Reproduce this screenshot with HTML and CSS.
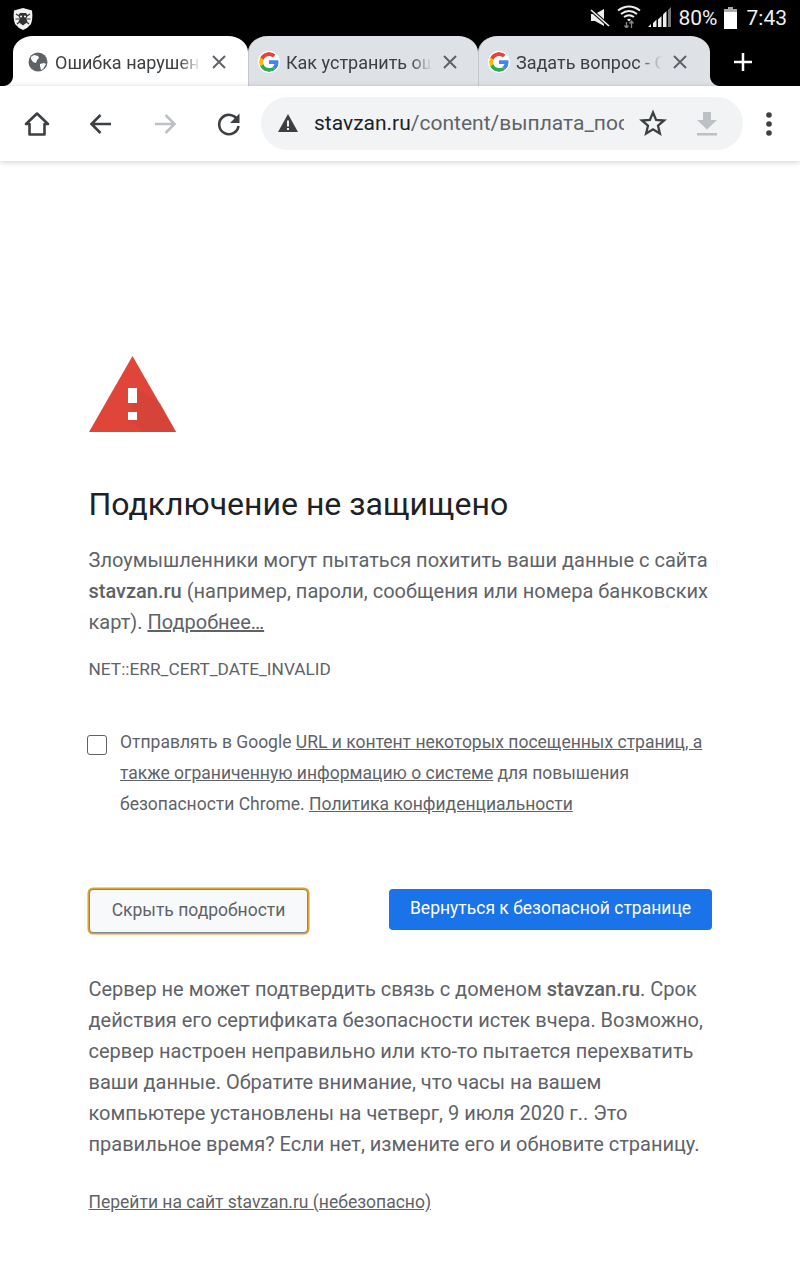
FILE: index.html
```html
<!DOCTYPE html>
<html lang="ru">
<head>
    <meta charset="UTF-8">
    <meta name="viewport" content="width=device-width, initial-scale=1.0">
    <title>Ошибка нарушения конфиденциальности</title>
    <link rel="stylesheet" href="styles.css">
</head>
<body>
    <div class="status-bar">
        <svg class="status-shield" width="22" height="24" viewBox="0 0 22 24">
            <path d="M11 1 L20 3.500 Q21 12 19 17 Q16 21 11 23 Q6 21 3 17 Q1 12 2 3.500 Z" fill="#f2f2f2"/>
            <path d="M8 6h6l1.500 2-1 4 1 3-4.500 3.500L6.500 15l1-3-1-4z" fill="#333"/>
            <path d="M4 7l3 2M18 7l-3 2M3.500 12h3.500M18.500 12H15M5 17l2.500-2M17 17l-2.500-2" stroke="#333" stroke-width="1.200" fill="none"/>
            <circle cx="9" cy="9.500" r="1" fill="#fff"/><circle cx="13" cy="9.500" r="1" fill="#fff"/>
        </svg>
        <div class="status-right">
            <svg class="status-mute" width="20" height="20" viewBox="0 0 20 20">
                <path d="M1 6h4l9-5v17l-9-5H1z" fill="#eee"/>
                <path d="M1 2l18 16" stroke="#000" stroke-width="3.500"/>
                <path d="M1 2l18 16" stroke="#eee" stroke-width="1.600"/>
            </svg>
            <svg class="status-wifi" width="24" height="24" viewBox="0 0 24 24">
                <path d="M1 6.500Q12-1.500 23 6.500M4 10Q12 4 20 10M7 13Q12 9.500 17 13" stroke="#eee" stroke-width="2" fill="none"/>
                <path d="M10 15.500Q12 14 14 15.500L12 17.500z" fill="#eee"/>
                <path d="M9.500 18v6M7.500 21.500l2 2.500 2-2.500" stroke="#888" stroke-width="1.300" fill="none"/>
                <path d="M14.500 24v-7M12.500 19.500l2-2.500 2 2.500" stroke="#888" stroke-width="1.300" fill="none"/>
            </svg>
            <svg class="status-signal" width="24" height="22" viewBox="0 0 24 22">
                <path d="M1 21h3v-3zM6 21h3.500v-7.500L6 17zM11 21h3.500V10L11 13.500z" fill="#eee"/>
                <path d="M16 21h3.500V5L16 8.500z" fill="#eee"/>
                <path d="M21 21h3V1l-3 3z" fill="#777"/>
            </svg>
            <span class="status-pct">80%</span>
            <svg class="status-batt" width="13" height="22" viewBox="0 0 13 22">
                <path d="M4 0h5v2H4z" fill="#aaa"/>
                <path d="M0 2h13v3H0z" fill="#aaa"/>
                <path d="M0 5h13v17H0z" fill="#fff"/>
            </svg>
            <span class="status-time">7:43</span>
        </div>
    </div>

    <div class="tab-strip">
        <div class="tab tab-active">
            <svg class="tab-icon" width="20" height="20" viewBox="0 0 20 20">
                <circle cx="10" cy="10" r="9.500" fill="#5f6368"/>
                <path d="M3 5l3-2 4 1 1 2-2 2-1 3-3-1-2-3zM12 12l4-1 2 1-3 5-2 1-1-4z" fill="#fff"/>
            </svg>
            <span class="tab-title">Ошибка нарушения</span>
            <svg class="tab-close" width="16" height="16" viewBox="0 0 16 16"><path d="M2 2l12 12M14 2L2 14"/></svg>
        </div>
        <div class="tab">
            <svg class="tab-icon g-icon" width="20" height="20" viewBox="0 0 48 48">
                <path fill="#EA4335" d="M24 9.500c3.500 0 6.700 1.300 9.100 3.400l6.800-6.800C35.800 2.400 30.300 0 24 0 14.600 0 6.500 5.400 2.600 13.200l7.900 6.200C12.400 13.600 17.700 9.500 24 9.500z"/>
                <path fill="#4285F4" d="M47 24.500c0-1.600-.2-3.100-.4-4.500H24v9h12.900c-.6 3-2.200 5.400-4.700 7.100l7.600 5.900C44.300 37.900 47 31.800 47 24.500z"/>
                <path fill="#FBBC05" d="M10.500 28.600c-.5-1.400-.8-3-.8-4.600s.3-3.200.8-4.600l-7.900-6.200C.9 16.500 0 20.100 0 24s.9 7.500 2.600 10.800z"/>
                <path fill="#34A853" d="M24 48c6.500 0 11.900-2.100 15.900-5.800l-7.600-5.900c-2.200 1.400-4.900 2.300-8.300 2.300-6.300 0-11.600-4.200-13.500-9.900l-7.900 6.200C6.500 42.600 14.600 48 24 48z"/>
            </svg>
            <span class="tab-title">Как устранить ошибку</span>
            <svg class="tab-close" width="16" height="16" viewBox="0 0 16 16"><path d="M2 2l12 12M14 2L2 14"/></svg>
        </div>
        <div class="tab tab-last">
            <svg class="tab-icon g-icon" width="20" height="20" viewBox="0 0 48 48">
                <path fill="#EA4335" d="M24 9.500c3.500 0 6.700 1.300 9.100 3.400l6.800-6.800C35.800 2.400 30.300 0 24 0 14.600 0 6.500 5.400 2.600 13.200l7.900 6.200C12.400 13.600 17.700 9.500 24 9.500z"/>
                <path fill="#4285F4" d="M47 24.500c0-1.600-.2-3.100-.4-4.500H24v9h12.900c-.6 3-2.200 5.400-4.700 7.100l7.600 5.900C44.300 37.900 47 31.800 47 24.500z"/>
                <path fill="#FBBC05" d="M10.500 28.600c-.5-1.400-.8-3-.8-4.600s.3-3.200.8-4.600l-7.900-6.200C.9 16.500 0 20.100 0 24s.9 7.500 2.600 10.800z"/>
                <path fill="#34A853" d="M24 48c6.500 0 11.900-2.100 15.900-5.800l-7.600-5.900c-2.200 1.400-4.900 2.300-8.300 2.300-6.300 0-11.600-4.200-13.500-9.900l-7.900 6.200C6.500 42.600 14.600 48 24 48z"/>
            </svg>
            <span class="tab-title">Задать вопрос - Google</span>
            <svg class="tab-close" width="16" height="16" viewBox="0 0 16 16"><path d="M2 2l12 12M14 2L2 14"/></svg>
        </div>
        <svg class="new-tab" width="20" height="20" viewBox="0 0 20 20"><path d="M10 1v18M1 10h18"/></svg>
    </div>

    <div class="toolbar">
        <svg class="tool-icon" width="28" height="28" viewBox="0 0 28 28">
            <path d="M14 3.500L3 14h3.500v10.500h15V14H25z" fill="none" stroke="#3c4043" stroke-width="2.600" stroke-linejoin="round"/>
        </svg>
        <svg class="tool-icon" width="28" height="28" viewBox="0 0 28 28">
            <path d="M24 14H5M13.500 5L4.500 14l9 9" fill="none" stroke="#3c4043" stroke-width="2.600"/>
        </svg>
        <svg class="tool-icon" width="28" height="28" viewBox="0 0 28 28">
            <path d="M4 14h19M14.500 5l9 9-9 9" fill="none" stroke="#bdc1c6" stroke-width="2.600"/>
        </svg>
        <svg class="tool-icon" width="28" height="28" viewBox="0 0 28 28">
            <path d="M22.500 10A9.700 9.700 0 1 0 23.500 16" fill="none" stroke="#3c4043" stroke-width="2.600"/>
            <path d="M24.500 3.500v9.500H15z" fill="#3c4043"/>
        </svg>
        <div class="omnibox">
            <svg class="omni-warn" width="22" height="20" viewBox="0 0 22 20">
                <path d="M11 1L21 19H1z" fill="#3c4043"/>
                <path d="M10 7.500h2v6h-2zM10 15h2v2h-2z" fill="#f1f3f4"/>
            </svg>
            <span class="omni-url"><span class="omni-host">stavzan.ru</span>/content/выплата_пособий</span>
            <svg class="omni-star" width="28" height="28" viewBox="0 0 28 28">
                <path d="M14 3.500l3.100 7.400 8 .6-6.100 5.200 1.900 7.800L14 20.300l-6.900 4.200L9 16.700l-6.100-5.200 8-.6z" fill="none" stroke="#3c4043" stroke-width="2.300"/>
            </svg>
            <svg class="omni-download" width="24" height="26" viewBox="0 0 24 26">
                <path d="M8 2h8v8h6L12 19.500 2 10h6z" fill="#bdc1c6"/>
                <path d="M2 23h20v2.500H2z" fill="#bdc1c6"/>
            </svg>
        </div>
        <svg class="tool-menu" width="8" height="26" viewBox="0 0 8 26">
            <circle cx="4" cy="4" r="2.800" fill="#3c4043"/>
            <circle cx="4" cy="13" r="2.800" fill="#3c4043"/>
            <circle cx="4" cy="22" r="2.800" fill="#3c4043"/>
        </svg>
    </div>

    <div class="interstitial">
        <svg class="warn-icon" width="87" height="76" viewBox="0 0 87 76">
            <path d="M43.500 0L87 76H0z" fill="#e0453a"/>
            <path d="M48 32L71 47 87 76H53L39 62z" fill="#cf4237" opacity="0.6"/>
            <path d="M39 32h9v15h-9zM39 56h9v8h-9z" fill="#fff"/>
        </svg>

        <h1 class="main-heading">Подключение не защищено</h1>
        <p class="main-text">Злоумышленники могут пытаться похитить ваши данные с сайта <b>stavzan.ru</b> (например, пароли, сообщения или номера банковских карт). <a class="plain-link">Подробнее…</a></p>
        <div class="error-code">NET::ERR_CERT_DATE_INVALID</div>

        <div class="report-row">
            <span class="report-check"></span>
            <p class="report-text">Отправлять в Google <a class="plain-link">URL и контент некоторых посещенных страниц, а также ограниченную информацию о системе</a> для повышения безопасности Chrome. <a class="plain-link">Политика конфиденциальности</a></p>
        </div>

        <div class="button-row">
            <button class="btn btn-details">Скрыть подробности</button>
            <button class="btn btn-back">Вернуться к безопасной странице</button>
        </div>

        <p class="details-text">Сервер не может подтвердить связь с доменом <b>stavzan.ru</b>. Срок действия его сертификата безопасности истек вчера. Возможно, сервер настроен неправильно или кто-то пытается перехватить ваши данные. Обратите внимание, что часы на вашем компьютере установлены на четверг, 9 июля 2020 г.. Это правильное время? Если нет, измените его и обновите страницу.</p>
        <a class="plain-link proceed-link">Перейти на сайт stavzan.ru (небезопасно)</a>
    </div>
</body>
</html>
```

FILE: styles.css
```css
html, body {
    margin: 0;
    padding: 0;
}

body {
    width: 800px;
    height: 1280px;
    overflow: hidden;
    background-color: white;
    font-family: Roboto, "Noto Sans", sans-serif;
    color: #5f6368;
}

.status-bar {
    height: 36px;
    background-color: black;
    display: flex;
    align-items: center;
    justify-content: space-between;
    padding: 0 13px 0 12px;
    color: #f0f0f0;
}

.status-shield {
    margin-top: 1px;
}

.status-right {
    display: flex;
    align-items: center;
}

.status-wifi {
    margin-left: 7px;
    margin-top: -4px;
}

.status-signal {
    margin-left: 6px;
    margin-top: -2px;
}

.status-pct {
    font-size: 21px;
    margin-left: 8px;
}

.status-batt {
    margin-left: 6px;
}

.status-time {
    font-size: 21px;
    margin-left: 10px;
}

.tab-strip {
    height: 50px;
    background-color: black;
    display: flex;
    padding-left: 13px;
}

.tab {
    width: 230px;
    height: 50px;
    box-sizing: border-box;
    padding: 2px 20px 0 10px;
    background-color: #dee1e6;
    border-radius: 20px 20px 0 0 / 16px 16px 0 0;
    border-left: 1px solid #c4c7cc;
    display: flex;
    align-items: center;
    font-size: 18px;
    color: #3c4043;
    position: relative;
}

.tab-active {
    width: 235px;
    background-color: white;
    border-left: none;
    padding-left: 15px;
    padding-right: 21px;
}

/* little curves where the outer tabs meet the toolbar */
.tab-active::before {
    content: "";
    position: absolute;
    left: -10px;
    bottom: 0;
    width: 10px;
    height: 10px;
    background: radial-gradient(circle at 0 0, black 9.500px, white 10.500px);
}

.tab-last {
    width: 232px;
    padding-right: 22px;
}

.tab-last::after {
    content: "";
    position: absolute;
    right: -10px;
    bottom: 0;
    width: 10px;
    height: 10px;
    background: radial-gradient(circle at 100% 0, black 9.500px, #dee1e6 10.500px);
}

.tab-icon {
    flex-shrink: 0;
}

.g-icon {
    background-color: white;
    border-radius: 50%;
    box-shadow: 0 0 0 1px white;
}

.tab-title {
    flex: 1;
    min-width: 0;
    margin-left: 7px;
    white-space: nowrap;
    overflow: hidden;
    -webkit-mask-image: linear-gradient(to right, black 85%, transparent);
    mask-image: linear-gradient(to right, black 85%, transparent);
}

.tab-close {
    flex-shrink: 0;
    margin-left: 10px;
    fill: none;
    stroke: #5f6368;
    stroke-width: 2;
}

.new-tab {
    margin: 16px 0 0 23px;
    fill: none;
    stroke: white;
    stroke-width: 2.500;
}

.toolbar {
    height: 75px;
    box-sizing: border-box;
    background-color: white;
    display: flex;
    align-items: center;
    padding: 0 27px 0 23px;
    box-shadow: 0 1px 6px rgba(0, 0, 0, 0.2);
    position: relative;
}

.tool-icon {
    margin-right: 36px;
    flex-shrink: 0;
}

.tool-icon:nth-child(4) {
    margin-right: 18px;
}

.omnibox {
    width: 482px;
    height: 53px;
    margin-top: -1px;
    box-sizing: border-box;
    background-color: #f1f3f4;
    border-radius: 27px;
    display: flex;
    align-items: center;
    padding: 0 23px 0 16px;
    flex-shrink: 0;
}

.omni-url {
    width: 310px;
    margin-left: 15px;
    white-space: nowrap;
    overflow: hidden;
    font-size: 21px;
    color: #5f6368;
}

.omni-host {
    color: #202124;
}

.omni-star {
    margin-left: 15px;
}

.omni-download {
    margin-left: 28px;
}

.tool-menu {
    margin-left: 22px;
}

.interstitial {
    padding: 195px 88px 0 88.500px;
}

.warn-icon {
    display: block;
    margin-left: 0.500px;
}

.main-heading {
    margin: 52px 0 0;
    font-size: 32px;
    line-height: 40px;
    font-weight: 400;
    color: #202124;
}

.main-text {
    margin: 21px 0 0;
    font-size: 20px;
    line-height: 31px;
}

.main-text b,
.details-text b {
    font-weight: 500;
}

.plain-link {
    text-decoration: underline;
    color: #5f6368;
}

.error-code {
    margin-top: 19px;
    font-size: 17.300px;
    line-height: 24px;
}

.report-row {
    display: flex;
    margin-top: 46px;
    margin-left: -1.500px;
}

.report-check {
    width: 18px;
    height: 18px;
    flex-shrink: 0;
    margin: 8px 13px 0 0;
    border: 1px solid #5f6368;
    border-radius: 3px;
}

.report-text {
    margin: 0;
    font-size: 17.500px;
    line-height: 31px;
}

.button-row {
    display: flex;
    justify-content: space-between;
    align-items: flex-start;
    margin-top: 68px;
    margin-left: -0.500px;
}

.btn {
    font-family: Roboto, sans-serif;
    font-size: 17.500px;
    border-radius: 4px;
    padding: 0;
    box-sizing: border-box;
}

.btn-details {
    width: 219px;
    height: 44px;
    margin: 1px;
    padding-bottom: 2px;
    background-color: #f8f9fa;
    color: #5f6368;
    border: 1px solid #80868b;
    box-shadow: 0 0 0 1.500px #e0a030;
}

.btn-back {
    width: 323px;
    height: 41px;
    margin-top: 1px;
    padding-bottom: 3px;
    background-color: #1a73e8;
    color: white;
    border: none;
}

.details-text {
    margin: 40px 0 0;
    font-size: 20px;
    line-height: 31px;
}

.proceed-link {
    display: block;
    margin-top: 30px;
    font-size: 17.500px;
    line-height: 24px;
}
```
